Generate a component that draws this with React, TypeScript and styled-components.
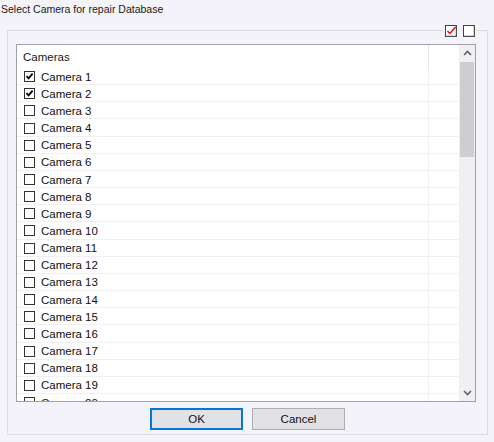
import React, { useState } from "react";
import styled, { createGlobalStyle } from "styled-components";

const GlobalStyle = createGlobalStyle`
  html, body {
    margin: 0;
    padding: 0;
    background: #f4f3f9;
  }
  body {
    font-family: "Liberation Sans", Arial, sans-serif;
  }
`;

const Window = styled.div`
  width: 494px;
  height: 442px;
  background: #f4f3f9;
  display: flex;
  flex-direction: column;
  overflow: hidden;
`;

const Title = styled.div`
  font-family: "Liberation Sans", Arial, sans-serif;
  font-size: 10.5px;
  color: #1a1a1a;
  padding: 3px 0 0 1px;
  height: 30px;
  box-sizing: border-box;
`;

const Group = styled.div`
  position: relative;
  margin-left: 7px;
  width: 481px;
  height: 405px;
  box-sizing: border-box;
  border: 1px solid #dcdce0;
  display: flex;
  flex-direction: column;
  padding: 13px 0 0 8px;
`;

const SelectTools = styled.div`
  position: absolute;
  top: -6px;
  right: 11px;
  display: flex;
  gap: 6px;
  background: #f4f3f9;
  padding: 0 1px;
`;

const ToolButton = styled.div`
  width: 12px;
  height: 12px;
  line-height: 0;
`;

const List = styled.div`
  width: 460px;
  height: 358px;
  box-sizing: border-box;
  border: 1px solid #a0a0a8;
  background: #fff;
  display: flex;
  overflow: hidden;
`;

const Rows = styled.div`
  flex: 1;
  overflow: hidden;
`;

const HeaderRow = styled.div`
  height: 23px;
  display: flex;
  align-items: center;
  font-size: 11.5px;
  color: #1a1a1a;
`;

const HeaderCell = styled.div<{ $w: number }>`
  width: ${(p) => p.$w}px;
  height: 100%;
  display: flex;
  align-items: center;
  box-sizing: border-box;
  padding: 1px 0 0 6px;
  border-right: 1px solid #e5e5ea;
`;

const Row = styled.div`
  height: 17.17px;
  display: flex;
  align-items: center;
  border-bottom: 1px solid #f0f0f3;
  box-sizing: border-box;
  font-size: 11.5px;
  color: #111;
  cursor: default;
`;

const NameCell = styled.div`
  width: 412px;
  height: 100%;
  display: flex;
  align-items: center;
  padding: 1px 0 0 7px;
  gap: 6px;
  box-sizing: border-box;
  border-right: 1px solid #f0f0f3;
`;

const Box = styled.span`
  width: 11px;
  height: 11px;
  box-sizing: border-box;
  border: 1px solid #333;
  background: #fff;
  display: inline-flex;
  align-items: center;
  justify-content: center;
`;

const ScrollBar = styled.div`
  width: 16px;
  background: #f0f0f3;
  display: flex;
  flex-direction: column;
  align-items: center;
`;

const Arrow = styled.div`
  height: 16px;
  width: 16px;
  display: flex;
  align-items: center;
  justify-content: center;
`;

const Track = styled.div`
  flex: 1;
  width: 100%;
  padding: 1px 1px 0;
  box-sizing: border-box;
`;

const Thumb = styled.div`
  width: 100%;
  height: 95px;
  background: #cdcdd2;
`;

const Buttons = styled.div`
  display: flex;
  justify-content: center;
  gap: 9px;
  margin-top: 6px;
  margin-left: -8px;
`;

const Button = styled.button<{ $default?: boolean }>`
  width: 93px;
  height: 22px;
  box-sizing: border-box;
  font-family: "Liberation Sans", Arial, sans-serif;
  font-size: 11.5px;
  color: #111;
  background: #e1e1e6;
  border: ${(p) => (p.$default ? "2px solid #0078d7" : "1px solid #adadb3")};
  padding: 0;
  border-radius: 0;
`;

const Check = () => (
  <svg width="9" height="9" viewBox="0 0 9 9">
    <path d="M1.5 4.2 L3.6 6.4 L7.6 1.6" fill="none" stroke="#000" strokeWidth="1.8" />
  </svg>
);

const CheckAllIcon = () => (
  <svg width="12" height="12" viewBox="0 0 12 12">
    <rect x="0.5" y="0.5" width="11" height="11" fill="#fff" stroke="#404040" />
    <path d="M11.5 0.5 V11.5 H0.5" fill="none" stroke="#505050" strokeWidth="1.5" />
    <path d="M2.5 6 L5 8.5 L10.5 2" fill="none" stroke="#e01010" strokeWidth="1.5" />
  </svg>
);

const UncheckAllIcon = () => (
  <svg width="12" height="12" viewBox="0 0 12 12">
    <rect x="0.5" y="0.5" width="11" height="11" fill="#fff" stroke="#404040" />
    <path d="M11.5 0.5 V11.5 H0.5" fill="none" stroke="#505050" strokeWidth="1.5" />
  </svg>
);

const cameras = Array.from({ length: 64 }, (_, i) => `Camera ${i + 1}`);

function App() {
  const [checked, setChecked] = useState<number[]>([0, 1]);

  const toggle = (i: number) => {
    setChecked((c) => (c.includes(i) ? c.filter((x) => x !== i) : [...c, i]));
  };

  return (
    <>
      <GlobalStyle />
      <Window>
        <Title>Select Camera for repair Database</Title>
        <Group>
          <SelectTools>
            <ToolButton onClick={() => setChecked(cameras.map((_, i) => i))}>
              <CheckAllIcon />
            </ToolButton>
            <ToolButton onClick={() => setChecked([])}>
              <UncheckAllIcon />
            </ToolButton>
          </SelectTools>
          <List>
            <Rows>
              <HeaderRow>
                <HeaderCell $w={412}>Cameras</HeaderCell>
              </HeaderRow>
              {cameras.slice(0, 20).map((name, i) => (
                <Row key={name} onClick={() => toggle(i)}>
                  <NameCell>
                    <Box>{checked.includes(i) ? <Check /> : null}</Box>
                    {name}
                  </NameCell>
                </Row>
              ))}
            </Rows>
            <ScrollBar>
              <Arrow>
                <svg width="9" height="6" viewBox="0 0 9 6">
                  <path d="M1 5 L4.5 1.5 L8 5" fill="none" stroke="#606066" strokeWidth="1.6" />
                </svg>
              </Arrow>
              <Track>
                <Thumb />
              </Track>
              <Arrow>
                <svg width="9" height="6" viewBox="0 0 9 6">
                  <path d="M1 1 L4.5 4.5 L8 1" fill="none" stroke="#606066" strokeWidth="1.6" />
                </svg>
              </Arrow>
            </ScrollBar>
          </List>
          <Buttons>
            <Button $default>OK</Button>
            <Button>Cancel</Button>
          </Buttons>
        </Group>
      </Window>
    </>
  );
}

export default App;
